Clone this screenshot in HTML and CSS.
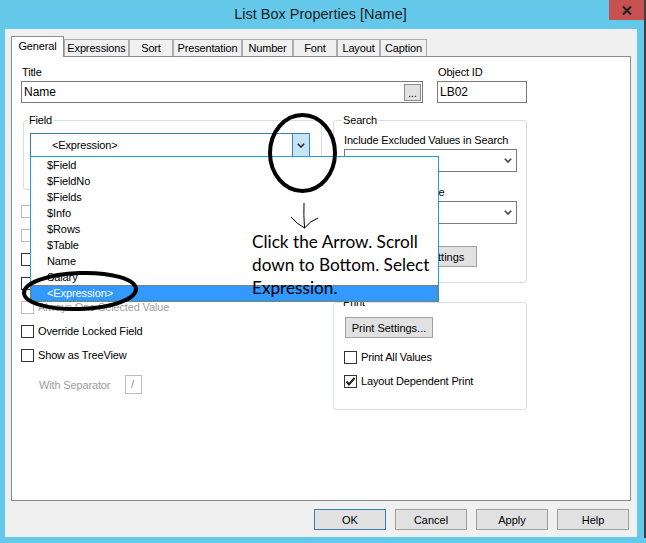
FILE: index.html
```html
<!DOCTYPE html>
<html>
<head>
<meta charset="utf-8">
<title>List Box Properties [Name]</title>
<link rel="stylesheet" href="styles.css">
</head>
<body>
<div class="window">
  <div class="titlebar">
    <div class="title">List Box Properties [Name]</div>
    <div class="close"><svg width="10" height="9" viewBox="0 0 10 9"><path d="M1 0.5 L9 8.5 M9 0.5 L1 8.5" stroke="#1c1c1c" stroke-width="2" fill="none"/></svg></div>
  </div>
  <div class="client">
    <div class="tabs">
      <div class="tab active t-general">General</div>
      <div class="tab t-expr">Expressions</div>
      <div class="tab t-sort">Sort</div>
      <div class="tab t-pres">Presentation</div>
      <div class="tab t-num">Number</div>
      <div class="tab t-font">Font</div>
      <div class="tab t-layout">Layout</div>
      <div class="tab t-caption">Caption</div>
    </div>
    <div class="panel">
      <div class="row-top">
        <div class="title-field">
          <div class="lbl">Title</div>
          <div class="input"><span class="input-text">Name</span><span class="dots">...</span></div>
        </div>
        <div class="objid">
          <div class="lbl">Object ID</div>
          <div class="input"><span class="input-text">LB02</span></div>
        </div>
      </div>
      <div class="cols">
        <div class="left">
          <fieldset class="group field-group">
            <legend>Field</legend>
            <div class="combo focus">
              <span class="combo-text">&lt;Expression&gt;</span>
              <span class="combo-btn"><svg width="8" height="5" viewBox="0 0 8 5"><path d="M0.8 0.8 L4 4 L7.2 0.8" stroke="#2a2a2a" stroke-width="1.6" fill="none"/></svg></span>
              <ul class="droplist">
                <li>$Field</li>
                <li>$FieldNo</li>
                <li>$Fields</li>
                <li>$Info</li>
                <li>$Rows</li>
                <li>$Table</li>
                <li>Name</li>
                <li>Salary</li>
                <li class="sel">&lt;Expression&gt;</li>
              </ul>
            </div>
          </fieldset>
          <div class="checks">
            <div class="check disabled"><span class="box"></span></div>
            <div class="check disabled"><span class="box"></span></div>
            <div class="check"><span class="box"></span></div>
            <div class="check"><span class="box"></span></div>
            <div class="check disabled"><span class="box"></span>Always One Selected Value</div>
            <div class="check"><span class="box"></span>Override Locked Field</div>
            <div class="check"><span class="box"></span>Show as TreeView</div>
          </div>
          <div class="sep-row"><span class="sep-label">With Separator</span><span class="sep-input">/</span></div>
        </div>
        <div class="right">
          <fieldset class="group search-group">
            <legend>Search</legend>
            <div class="s-label">Include Excluded Values in Search</div>
            <div class="combo plain">
              <span class="combo-text"></span>
              <span class="combo-btn"><svg width="8" height="5" viewBox="0 0 8 5"><path d="M0.8 0.8 L4 4 L7.2 0.8" stroke="#444" stroke-width="1.6" fill="none"/></svg></span>
            </div>
            <div class="s-label second">Default Search Mode</div>
            <div class="combo plain">
              <span class="combo-text"></span>
              <span class="combo-btn"><svg width="8" height="5" viewBox="0 0 8 5"><path d="M0.8 0.8 L4 4 L7.2 0.8" stroke="#444" stroke-width="1.6" fill="none"/></svg></span>
            </div>
            <button class="btn search-btn">Search Settings</button>
          </fieldset>
          <fieldset class="group print-group">
            <legend>Print</legend>
            <button class="btn print-btn">Print Settings...</button>
            <div class="check first"><span class="box"></span>Print All Values</div>
            <div class="check"><span class="box checked"><svg width="11" height="11" viewBox="0 0 11 11"><path d="M1.5 5.5 L4 8.5 L9.5 2" stroke="#222" stroke-width="2" fill="none"/></svg></span>Layout Dependent Print</div>
          </fieldset>
        </div>
      </div>
    </div>
    <div class="buttons">
      <button class="btn big default">OK</button>
      <button class="btn big">Cancel</button>
      <button class="btn big">Apply</button>
      <button class="btn big">Help</button>
    </div>
  </div>
  <svg class="annot" width="646" height="543" viewBox="0 0 646 543">
    <ellipse cx="302.5" cy="153" rx="32.5" ry="38" fill="none" stroke="#000" stroke-width="4"/>
    <ellipse cx="80" cy="291" rx="56" ry="18" fill="none" stroke="#000" stroke-width="4" transform="rotate(-2 80 291)"/>
    <path d="M304 203 Q303.5 215 304.5 228" stroke="#000" stroke-width="1" fill="none"/>
    <path d="M291 217 Q297 224 304.5 228 Q310 221 318 218" stroke="#000" stroke-width="1" fill="none"/>
  </svg>
  <div class="note">Click the Arrow. Scroll<br>down to Bottom. Select<br>Expression.</div>
</div>
</body>
</html>
```
FILE: styles.css
```css
* { box-sizing: border-box; }
html, body { margin: 0; padding: 0; }
body {
  width: 646px;
  height: 543px;
  overflow: hidden;
  background: #64c8eb;
  font-family: "Liberation Sans", Arial, sans-serif;
  font-size: 11px;
  letter-spacing: -0.15px;
  color: #000;
}
.window {
  position: relative;
  width: 646px;
  height: 543px;
  background: #64c8eb;
}
.window::after {
  content: "";
  position: absolute;
  right: 0;
  top: 0;
  width: 2px;
  height: 538px;
  background: #3e3e3e;
}
.titlebar {
  height: 29px;
  display: grid;
  grid-template-columns: 1fr auto 1fr;
  padding-right: 5px;
}
.title {
  grid-column: 2;
  font-size: 14.5px;
  line-height: 28px;
  letter-spacing: 0;
  color: #1e1e1e;
}
.close {
  grid-column: 3;
  justify-self: end;
  align-self: start;
  width: 35px;
  height: 20px;
  margin-right: -3px;
  background: #c75050;
  display: flex;
  align-items: center;
  justify-content: center;
}
.client {
  margin: 0 9px 0 5px;
  height: 508px;
  background: #f0f0f0;
  padding: 7px 6px 0 6px;
}
.tabs {
  display: flex;
  align-items: flex-end;
  height: 20px;
  position: relative;
  z-index: 1;
}
.tab {
  height: 17px;
  padding: 0;
  line-height: 16px;
  text-align: center;
  background: #f0f0f0;
  border: 1px solid #acacac;
  border-bottom: none;
  white-space: nowrap;
}
.t-general { width: 53px; }
.t-expr { width: 65px; }
.t-sort { width: 44px; }
.t-pres { width: 69px; }
.t-num { width: 51px; }
.t-font { width: 44px; }
.t-layout { width: 43px; }
.t-caption { width: 47px; }
.tab.active {
  height: 21px;
  margin-bottom: -1px;
  line-height: 19px;
  background: #fff;
  border-color: #898c95;
  position: relative;
  z-index: 2;
}
.panel {
  height: 445px;
  background: #fff;
  border: 1px solid #898c95;
  padding: 9px 0 0 9px;
}
.row-top {
  display: flex;
  gap: 14px;
}
.title-field { width: 402px; }
.objid { width: 90px; }
.lbl {
  line-height: 13px;
  margin-bottom: 2px;
  padding-left: 1px;
}
.input {
  height: 22px;
  border: 1px solid #7a7a7a;
  background: #fff;
  display: flex;
  align-items: center;
  padding-left: 2px;
}
.input-text {
  font-size: 12px;
  letter-spacing: 0;
}
.dots {
  margin-left: auto;
  margin-right: 1px;
  width: 17px;
  height: 17px;
  background: #e1e1e1;
  border: 1px solid #8a8a8a;
  text-align: center;
  line-height: 17px;
  font-size: 10px;
  letter-spacing: 0;
}
.cols {
  display: grid;
  grid-template-columns: 301px 194px;
  column-gap: 11px;
  margin-top: 10px;
  align-items: start;
}
fieldset.group {
  margin: 0;
  min-width: 0;
  border: 1px solid #d5dfe5;
  border-radius: 3px;
  padding: 0 10px;
}
fieldset.group legend {
  padding: 0 1px;
  line-height: 14px;
  margin-left: -2px;
}
.field-group {
  margin-left: 2px !important;
  padding: 0 6px 32px 6px !important;
}
.field-group legend { margin-left: -1px; }
.combo {
  position: relative;
  display: flex;
  width: 280px;
  height: 24px;
  margin-top: 6px;
  border: 1px solid #3c7fb1;
  background: #fff;
}
.combo-text {
  flex: 1;
  padding-left: 21px;
  line-height: 22px;
  white-space: nowrap;
  overflow: hidden;
}
.combo-btn {
  width: 17px;
  flex: none;
  background: #c4e5f6;
  border-left: 1px solid #3c7fb1;
  display: flex;
  align-items: center;
  justify-content: center;
}
.combo.plain {
  width: 173px;
  height: 23px;
  margin-top: 2px;
  border-color: #7a7a7a;
}
.combo.plain .combo-text {
  padding-left: 4px;
  line-height: 21px;
}
.combo.plain .combo-btn {
  background: transparent;
  border-left: none;
}
.droplist {
  position: absolute;
  left: -1px;
  top: 22px;
  width: 409px;
  height: 146px;
  margin: 0;
  padding: 0;
  list-style: none;
  background: #fff;
  border: 1px solid #1e9fe0;
  z-index: 5;
}
.droplist li {
  height: 16px;
  line-height: 17px;
  padding-left: 16px;
  letter-spacing: -0.1px;
}
.droplist li.sel {
  background: #3399ff;
  color: #fff;
  outline: 1px dotted #cc6600;
  outline-offset: -1px;
}
.checks { margin-top: 9px; }
.check {
  display: flex;
  align-items: center;
  height: 24px;
  white-space: nowrap;
}
.box {
  width: 13px;
  height: 13px;
  flex: none;
  border: 1px solid #333;
  background: #fff;
  margin-right: 4px;
  display: flex;
  align-items: center;
  justify-content: center;
}
.check.disabled { color: #a0a0a0; }
.check.disabled .box { border-color: #bcbcbc; }
.sep-row {
  display: flex;
  align-items: center;
  height: 19px;
  margin-top: 8px;
  padding-left: 18px;
  color: #9d9d9d;
}
.sep-label { width: 86px; }
.sep-input {
  width: 17px;
  height: 19px;
  border: 1px solid #bcbcbc;
  background: #fff;
  padding-left: 5px;
  line-height: 17px;
  color: #888;
}
.search-group { padding-bottom: 15px !important; }
.s-label {
  line-height: 13px;
  margin-top: 7px;
  white-space: nowrap;
}
.s-label.second { margin-top: 14px; }
.btn {
  font: inherit;
  color: #000;
  height: 21px;
  padding: 0;
  background: #e1e1e1;
  border: 1px solid #a0a0a0;
  border-radius: 0;
  display: block;
}
.search-btn {
  width: 103px;
  margin-top: 22px;
  margin-left: 30px;
}
.print-group {
  margin-top: 12px !important;
  padding-bottom: 16px !important;
}
.print-btn {
  width: 88px;
  margin-top: 8px;
  margin-left: 1px;
}
.print-group .check.first { margin-top: 7px; }
.buttons {
  display: flex;
  justify-content: flex-end;
  gap: 9px;
  margin-top: 8px;
  padding-right: 2px;
}
.btn.big { width: 72px; }
.btn.default { border-color: #3c7fb1; }
.annot {
  position: absolute;
  left: 0;
  top: 0;
  z-index: 10;
  pointer-events: none;
}
.note {
  position: absolute;
  left: 252px;
  top: 230px;
  z-index: 11;
  font-family: Lato, "Liberation Sans", sans-serif;
  font-size: 17.2px;
  line-height: 23px;
  letter-spacing: 0;
  color: #000;
}
```
